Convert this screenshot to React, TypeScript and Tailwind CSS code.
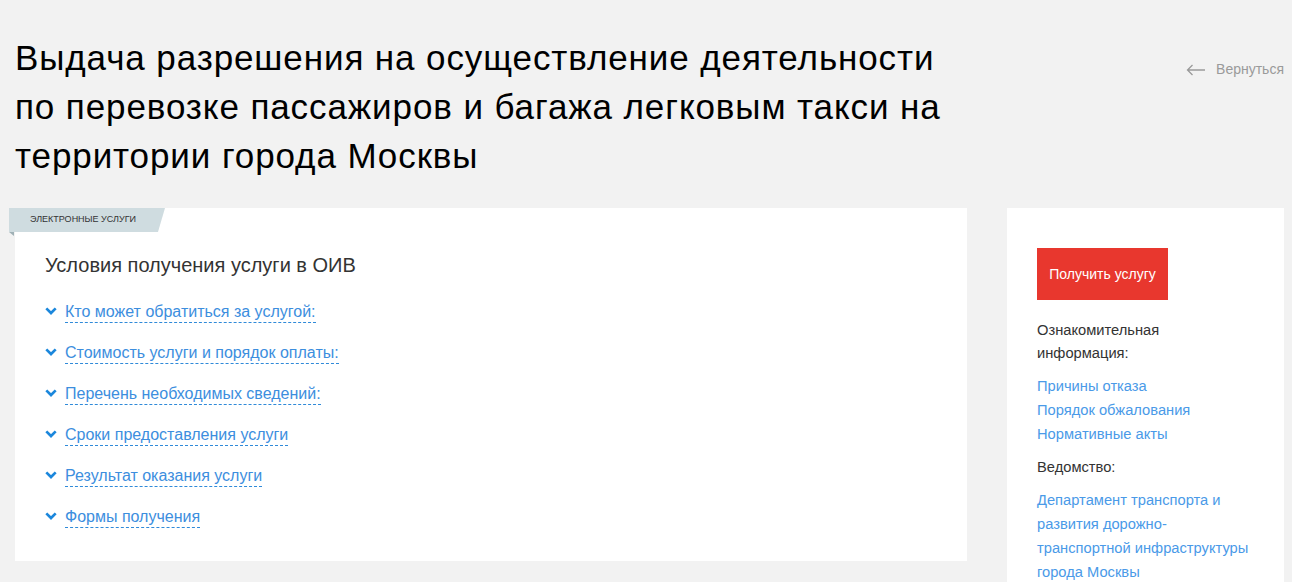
const conditions = [
  "Кто может обратиться за услугой:",
  "Стоимость услуги и порядок оплаты:",
  "Перечень необходимых сведений:",
  "Сроки предоставления услуги",
  "Результат оказания услуги",
  "Формы получения",
];

const infoLinks = ["Причины отказа", "Порядок обжалования", "Нормативные акты"];

export default function App() {
  return (
    <div
      className="min-h-screen bg-[#f2f2f2] pl-[15px] pr-[8px] pt-[33px] text-[#333]"
      style={{ fontFamily: '"Liberation Sans", Arial, sans-serif' }}
    >
      {/* Header */}
      <div className="flex items-start justify-between">
        <h1 className="w-[945px] text-[35px] leading-[49px] tracking-[0.9px] text-black">
          Выдача разрешения на осуществление деятельности по перевозке пассажиров и багажа легковым такси на территории города Москвы
        </h1>
        <a className="mt-[26px] flex items-center gap-[10px] text-[14px] text-[#9a9a9a]">
          <svg width="20" height="12" viewBox="0 0 20 12" fill="none" stroke="#9a9a9a" strokeWidth="1.3">
            <path d="M19 6H1.5M6.5 1L1.5 6l5 5" />
          </svg>
          Вернуться
        </a>
      </div>

      <div className="mt-[28px] flex gap-[40px]">
        {/* Main card */}
        <div className="relative h-[353px] w-[952px] bg-white">
          <div className="absolute left-[-6px] top-0">
            <div
              className="flex h-[24px] w-[156px] items-center pl-[21px] text-[9px] uppercase text-[#333] bg-[#cfdce0]"
              style={{ clipPath: "polygon(0 0, 100% 0, 95.5% 100%, 0 100%)" }}
            >
              Электронные услуги
            </div>
            <div
              className="h-[4px] w-[5px] bg-[#9fb0b5]"
              style={{ clipPath: "polygon(0 0, 100% 0, 100% 100%)" }}
            />
          </div>

          <div className="pl-[30px] pt-[45px]">
            <h2 className="text-[20px] leading-[24px] text-[#333]">Условия получения услуги в ОИВ</h2>
            <ul className="mt-[23px] flex flex-col gap-[17px]">
              {conditions.map((c) => (
                <li key={c} className="flex h-[24px] items-center">
                  <svg width="12" height="8" viewBox="0 0 12 8" fill="none" className="mr-[8px] mb-[3px]">
                    <path d="M1.3 1.4L6 6L10.7 1.4" stroke="#1b87dc" strokeWidth="2.7" />
                  </svg>
                  <span className="border-b border-dashed border-[#2f8ad9] text-[16px] leading-[20px] text-[#3c8ede]">
                    {c}
                  </span>
                </li>
              ))}
            </ul>
          </div>
        </div>

        {/* Sidebar */}
        <div className="w-[277px] bg-white pl-[30px] pt-[40px] pb-[20px]">
          <button className="flex h-[52px] w-[131px] items-center justify-center bg-[#e8372e] text-[14px] text-white">
            Получить услугу
          </button>
          <div className="w-[216px] text-[14.7px]">
            <p className="mt-[19px] leading-[23px] text-[#333]">
              Ознакомительная
              <br />
              информация:
            </p>
            <ul className="mt-[9px] flex flex-col leading-[24px] text-[#4a9ae8]">
              {infoLinks.map((l) => (
                <li key={l}>{l}</li>
              ))}
            </ul>
            <p className="mt-[9px] leading-[24px] text-[#333]">Ведомство:</p>
            <p className="mt-[9px] leading-[24px] text-[#4a9ae8]">
              Департамент транспорта и развития дорожно-транспортной инфраструктуры города Москвы
            </p>
          </div>
        </div>
      </div>
    </div>
  );
}
